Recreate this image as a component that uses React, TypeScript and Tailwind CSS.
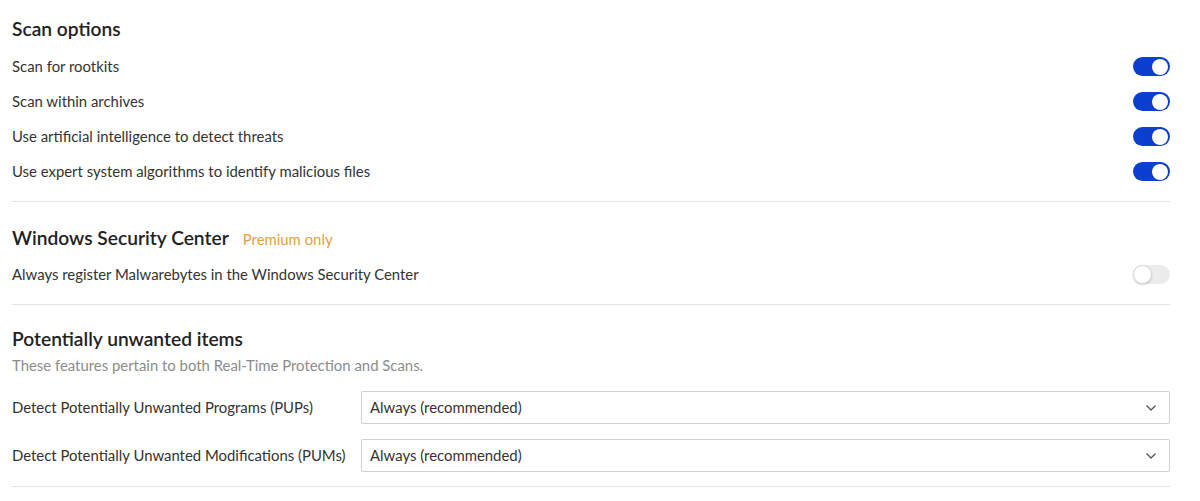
import React from "react";

function Toggle({ on }: { on: boolean }) {
  return on ? (
    <div className="w-[37px] h-[19px] rounded-full bg-[#0b3fd0] flex items-center justify-end pr-[2px]">
      <div className="w-[16px] h-[16px] rounded-full bg-white shadow-[0_0_1px_rgba(0,0,0,0.4)]" />
    </div>
  ) : (
    <div className="w-[37px] h-[19px] rounded-full bg-[#ececec] flex items-center justify-start">
      <div className="w-[19px] h-[19px] rounded-full bg-white border border-[#dcdcdc] shadow-[0_1px_2px_rgba(0,0,0,0.2)]" />
    </div>
  );
}

function ToggleRow({ label, on }: { label: string; on: boolean }) {
  return (
    <div className="h-[35px] flex items-center justify-between">
      <span className="text-[14.9px] text-[#333333]">{label}</span>
      <Toggle on={on} />
    </div>
  );
}

function SelectRow({ label }: { label: string }) {
  return (
    <div className="flex items-center">
      <span className="w-[349px] shrink-0 text-[14.9px] text-[#333333]">{label}</span>
      <div className="flex-1 h-[33px] border border-[#cfcfcf] rounded-[2px] flex items-center justify-between pl-[8px] pr-[12px] bg-white">
        <span className="text-[14.9px] text-[#333333]">Always (recommended)</span>
        <svg width="12" height="8" viewBox="0 0 12 8" fill="none">
          <path d="M1.5 1.5 L6 6 L10.5 1.5" stroke="#555" strokeWidth="1.3" />
        </svg>
      </div>
    </div>
  );
}

export default function App() {
  return (
    <div
      className="w-[1200px] h-[501px] bg-white pl-[12px] pr-[30px] overflow-hidden"
      style={{ fontFamily: "Lato, 'Noto Sans', sans-serif" }}
    >
      <section className="pt-[17px] pb-[12px] border-b border-[#e3e3e3]">
        <h2 className="text-[19.2px] leading-[24px] text-[#222222] font-semibold mb-[8px]">Scan options</h2>
        <ToggleRow label="Scan for rootkits" on />
        <ToggleRow label="Scan within archives" on />
        <ToggleRow label="Use artificial intelligence to detect threats" on />
        <ToggleRow label="Use expert system algorithms to identify malicious files" on />
      </section>
      <section className="pt-[24px] pb-[12px] border-b border-[#e3e3e3]">
        <div className="flex items-baseline gap-[14px] leading-[24px]">
          <h2 className="text-[19.2px] text-[#222222] font-semibold">Windows Security Center</h2>
          <span className="text-[14.9px] text-[#e5a03c]">Premium only</span>
        </div>
        <div className="mt-[6px]">
          <ToggleRow label="Always register Malwarebytes in the Windows Security Center" on={false} />
        </div>
      </section>
      <section className="pt-[22px] pb-[14px] border-b border-[#e3e3e3]">
        <h2 className="text-[19.2px] leading-[24px] text-[#222222] font-semibold">Potentially unwanted items</h2>
        <p className="text-[14.9px] leading-[20px] text-[#8c8c8c] mt-[4px]">
          These features pertain to both Real-Time Protection and Scans.
        </p>
        <div className="mt-[16px] flex flex-col gap-[15px]">
          <SelectRow label="Detect Potentially Unwanted Programs (PUPs)" />
          <SelectRow label="Detect Potentially Unwanted Modifications (PUMs)" />
        </div>
      </section>
    </div>
  );
}
